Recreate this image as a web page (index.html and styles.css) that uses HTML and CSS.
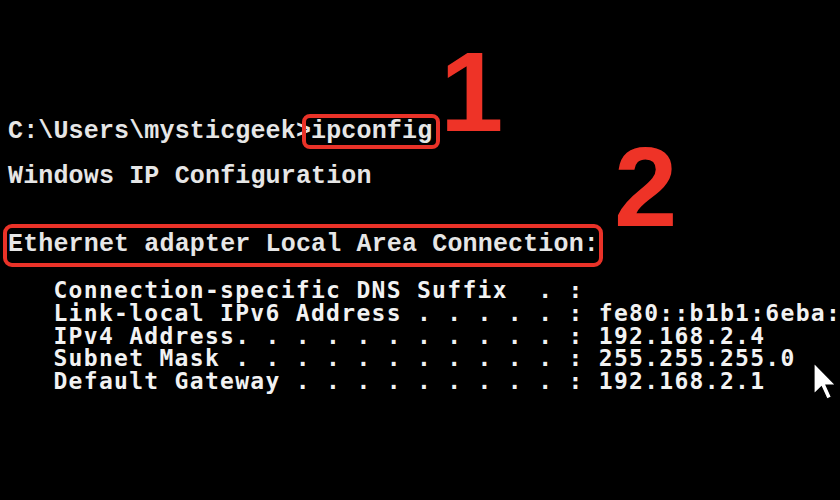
FILE: index.html
```html
<!DOCTYPE html>
<html>
<head>
<meta charset="utf-8">
<link rel="stylesheet" href="styles.css">
</head>
<body>
<div class="screen">
  <div class="console">
    <div class="line up">C:\Users\mysticgeek&gt;<span class="hl hl1">ipconfig</span></div>
    <div class="line"></div>
    <div class="line up">Windows IP Configuration</div>
    <div class="line"></div>
    <div class="line"></div>
    <div class="line up"><span class="hl hl2">Ethernet adapter Local Area Connection:</span></div>
    <div class="line"></div>
    <div class="line low">   Connection-specific DNS Suffix  . :</div>
    <div class="line low">   Link-local IPv6 Address . . . . . : fe80::b1b1:6eba:</div>
    <div class="line low">   IPv4 Address. . . . . . . . . . . : 192.168.2.4</div>
    <div class="line low">   Subnet Mask . . . . . . . . . . . : 255.255.255.0</div>
    <div class="line low">   Default Gateway . . . . . . . . . : 192.168.2.1</div>
  </div>
  <div class="num num1">1</div>
  <div class="num num2">2</div>
  <svg class="cursor" width="24" height="38" viewBox="0 0 12 19">
    <path d="M0.5 0.5 L0.5 16 L4.2 12.4 L7 18.5 L9.2 17.5 L6.5 11.5 L11.3 11.5 Z" fill="#fff" stroke="#000" stroke-width="0.6" stroke-linejoin="miter"/>
  </svg>
</div>
</body>
</html>
```
FILE: styles.css
```css
html, body {
  margin: 0;
  padding: 0;
  background: #000;
}
.screen {
  position: relative;
  width: 840px;
  height: 500px;
  overflow: hidden;
  background: #000;
}
.console {
  padding: 120.5px 0 0 8px;
}
.line {
  height: 22.7px;
  line-height: 22.7px;
  white-space: pre;
}
.up {
  font-family: "Liberation Mono", monospace;
  font-weight: bold;
  font-size: 25px;
  letter-spacing: 0.15px;
  color: #e6e6e6;
}
.low {
  font-family: "DejaVu Sans Mono", monospace;
  font-weight: bold;
  font-size: 23px;
  letter-spacing: 1.3px;
  color: #f2f2f2;
}
.hl {
  position: relative;
}
.hl::after {
  content: "";
  position: absolute;
  border: 4px solid #ea3228;
}
.hl1::after {
  top: -3px;
  bottom: -3px;
  left: -9px;
  right: -8px;
  border-radius: 8px;
}
.hl2::after {
  top: -6px;
  bottom: -8px;
  left: -5px;
  right: -4px;
  border-radius: 9px;
}
.num {
  position: absolute;
  font-family: "Liberation Sans", Arial, sans-serif;
  font-weight: bold;
  font-size: 114px;
  line-height: 114px;
  color: #ee3327;
}
.num1 {
  left: 440px;
  top: 35px;
}
.num2 {
  left: 614px;
  top: 130px;
}
.cursor {
  position: absolute;
  left: 813px;
  top: 362px;
}
```
